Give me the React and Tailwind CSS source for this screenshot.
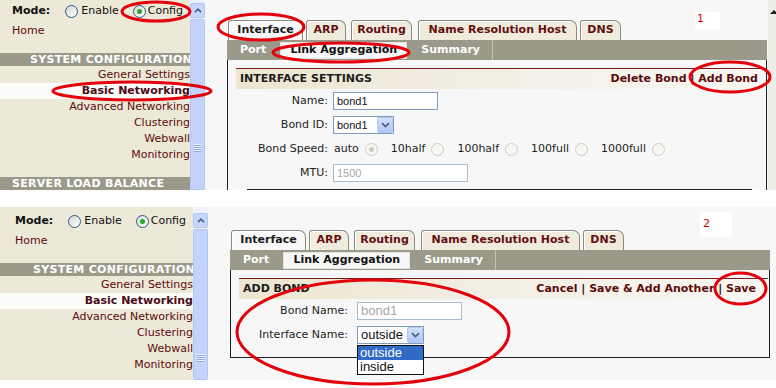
import React from 'react';

const MENU = ['General Settings', 'Basic Networking', 'Advanced Networking', 'Clustering', 'Webwall', 'Monitoring'];

const TABS = [
  { label: 'Interface', w: 'w-[75px]', ml: 'ml-0', active: true },
  { label: 'ARP', w: 'w-[40px]', ml: 'ml-[3px]' },
  { label: 'Routing', w: 'w-[61px]', ml: 'ml-[5px]' },
  { label: 'Name Resolution Host', w: 'w-[159px]', ml: 'ml-[6px]' },
  { label: 'DNS', w: 'w-[41px]', ml: 'ml-[3px]' },
];

function Radio({ checked, disabled }) {
  const ring = disabled
    ? 'border-[#cfcdc2] bg-[#f7f7f4]'
    : 'border-[#2a5a8a] bg-gradient-to-br from-[#d8d8d0] to-white';
  return (
    <span className={`inline-flex shrink-0 items-center justify-center w-[13px] h-[13px] rounded-full border ${ring}`}>
      {checked && <span className={`w-[5px] h-[5px] rounded-full ${disabled ? 'bg-[#cbc9be]' : 'bg-[#2aa52a]'}`} />}
    </span>
  );
}

function Sidebar({ server }) {
  return (
    <div className="w-[193px] shrink-0 h-full bg-[#ece9d8] overflow-hidden">
      <div className="flex items-center h-[16px] mt-[6px] pl-[15px] text-[#111]">
        <span className="font-bold">Mode:</span>
        <span className="ml-[15px] flex"><Radio /></span>
        <span className="ml-[3px]">Enable</span>
        <span className="ml-[14px] flex"><Radio checked /></span>
        <span className="ml-[2px]">Config</span>
      </div>
      <div className="h-[16px] leading-[16px] mt-[4px] pl-[15px] text-[#5c0b0b]">Home</div>
      <div className="h-[13px] leading-[13px] mt-[14px] bg-[#9b9a8a] text-white font-bold pl-[33px] whitespace-nowrap tracking-[0.3px]">
        SYSTEM CONFIGURATION
      </div>
      <div className="mt-[1px]">
        {MENU.map(item => (
          <div
            key={item}
            className={`h-[16px] leading-[16px] text-right whitespace-nowrap ${item === 'Basic Networking' ? 'bg-[#fbfbf9] font-bold text-[#4a0c16]' : 'text-[#5c0b0b]'}`}
          >
            {item}
          </div>
        ))}
      </div>
      {server && (
        <div className="h-[13px] leading-[13px] mt-[14px] bg-[#9b9a8a] text-white font-bold pl-[15px] whitespace-nowrap tracking-[0.3px]">
          SERVER LOAD BALANCE
        </div>
      )}
    </div>
  );
}

function SideScroll() {
  return (
    <div className="w-[15px] shrink-0 h-full bg-[#eef1fb] flex flex-col pt-[6px]">
      <div className="h-[15px] rounded-[2px] border border-[#b3c6f4] bg-[#c6d6fc] flex items-center justify-center">
        <svg width="8" height="5" viewBox="0 0 8 5">
          <path d="M1 4.2 L4 1.2 L7 4.2" stroke="#4d6185" strokeWidth="1.7" fill="none" />
        </svg>
      </div>
      <div className="mt-[1px] flex-1 rounded-[2px] border border-[#b3c6f4] bg-[#c3d4fc] flex flex-col items-center pt-[124px] gap-[1px]">
        {[0, 1, 2, 3].map(i => (
          <span key={i} className="w-[7px] h-[1px] bg-[#eef3ff] shadow-[0_1px_0_#8ca8e8]" />
        ))}
      </div>
    </div>
  );
}

function RightScroll() {
  return (
    <div className="w-[15px] shrink-0 h-full bg-[#eeede6] flex flex-col pt-[12px] pl-[2px]">
      <svg width="8" height="5" viewBox="0 0 8 5">
        <path d="M0 5 L4 1 L8 5 Z" fill="#222" />
      </svg>
    </div>
  );
}

function Tabs() {
  return (
    <div className="flex h-[20px] ml-[23px]">
      {TABS.map(t => (
        <div
          key={t.label}
          className={`${t.w} ${t.ml} h-[20px] flex items-center justify-center font-bold border border-b-0 border-[#8c8a7c] rounded-tl-[3px] rounded-tr-[7px] shadow-[inset_1px_1px_0_#fff] whitespace-nowrap ${t.active ? 'bg-[#f8f8f8] text-[#1a1a1a]' : 'bg-[#efebdd] text-[#641010]'}`}
        >
          {t.label}
        </div>
      ))}
    </div>
  );
}

function Subtabs() {
  return (
    <div className="-mx-px h-[20px] bg-[#9b9a8a] flex items-center font-bold text-white">
      <span className="ml-[13px]">Port</span>
      <span className="ml-[14px] w-[127px] h-[17px] flex items-center justify-center bg-[#f7f7f7] border border-[#e4e4e0] text-[#111]">
        Link Aggregation
      </span>
      <span className="ml-[14px]">Summary</span>
      <span className="ml-[12px] w-px h-[20px] bg-[#c4c3b6]" />
    </div>
  );
}

function Header({ title, links, pr }) {
  return (
    <div className={`h-[21px] border-t border-[#7a1d1d] bg-gradient-to-r from-[#ece5d0] via-[#f3efe5] to-[#f8f7f3] flex items-center justify-between pl-[4px] ${pr} font-bold`}>
      <span className="text-[#1c1c1c]">{title}</span>
      <span className="text-[#5c0b0b] whitespace-nowrap">
        {links.map((l, i) => (
          <span key={l}>
            {i > 0 && <span className="text-[#3a0808]"> | </span>}
            {l}
          </span>
        ))}
      </span>
    </div>
  );
}

function Row({ label, lw, gap, children }) {
  return (
    <div className="h-[24px] flex items-center">
      <span className={`${lw} text-right shrink-0 whitespace-nowrap`}>{label}</span>
      <div className={`${gap} flex items-center`}>{children}</div>
    </div>
  );
}

function TextBox({ value, w, disabled, text }) {
  return (
    <div className={`${w} h-[18px] border bg-white flex items-center pl-[3px] font-['Liberation_Sans',Arial,sans-serif] ${text} ${disabled ? 'border-[#a9bccf] text-[#a8a8a8]' : 'border-[#7f9db9] text-[#111]'}`}>
      {value}
    </div>
  );
}

function Select({ value, w, text, children }) {
  return (
    <div className={`relative ${w} h-[18px] border border-[#7f9db9] bg-white flex items-center font-['Liberation_Sans',Arial,sans-serif] ${text} text-[#111]`}>
      <span className="pl-[3px] flex-1">{value}</span>
      <span className="w-[16px] h-[16px] rounded-[2px] border border-[#b5c8f4] bg-gradient-to-b from-[#d2dffd] to-[#b3c8f6] flex items-center justify-center">
        <svg width="9" height="6" viewBox="0 0 9 6">
          <path d="M1 1.2 L4.5 4.6 L8 1.2" stroke="#4d6185" strokeWidth="1.8" fill="none" />
        </svg>
      </span>
      {children}
    </div>
  );
}

function SpeedOption({ label, checked }) {
  return (
    <span className="flex items-center mr-[13px]">
      <span>{label}</span>
      <span className="ml-[6px] flex"><Radio disabled checked={checked} /></span>
    </span>
  );
}

function TopForm() {
  return (
    <div>
      <Header title="INTERFACE SETTINGS" links={['Delete Bond', 'Add Bond']} pr="pr-[7px]" />
      <Row label="Name:" lw="w-[92px]" gap="ml-[5px]">
        <TextBox value="bond1" w="w-[105px]" text="text-[11px]" />
      </Row>
      <Row label="Bond ID:" lw="w-[92px]" gap="ml-[5px]">
        <Select value="bond1" w="w-[61px]" text="text-[11px]" />
      </Row>
      <Row label="Bond Speed:" lw="w-[92px]" gap="ml-[6px]">
        <SpeedOption label="auto" checked />
        <SpeedOption label="10half" />
        <SpeedOption label="100half" />
        <SpeedOption label="100full" />
        <SpeedOption label="1000full" />
      </Row>
      <Row label="MTU:" lw="w-[92px]" gap="ml-[5px]">
        <TextBox value="1500" w="w-[135px]" disabled text="text-[11px]" />
      </Row>
      <div className="mt-[4px] ml-[11px] w-[505px] h-px bg-[#222]" />
    </div>
  );
}

function BottomForm() {
  return (
    <div>
      <Header title="ADD BOND" links={['Cancel', 'Save & Add Another', 'Save']} pr="pr-[12px]" />
      <Row label="Bond Name:" lw="w-[109px]" gap="ml-[9px]">
        <TextBox value="bond1" w="w-[105px]" disabled text="text-[13px]" />
      </Row>
      <Row label="Interface Name:" lw="w-[109px]" gap="ml-[9px]">
        <Select value="outside" w="w-[67px]" text="text-[13px]">
          <div className="absolute left-[-1px] top-[18px] w-[67px] border border-[#111] bg-white leading-[14px]">
            <div className="h-[14px] pl-[2px] bg-[#316ac5] text-white">outside</div>
            <div className="h-[14px] pl-[2px] text-[#111]">inside</div>
          </div>
        </Select>
      </Row>
    </div>
  );
}

function Panel({ top }) {
  return (
    <div className="relative flex h-full">
      <Sidebar server={top} />
      <SideScroll />
      <div className={`${top ? 'w-[563px]' : 'w-[568px]'} shrink-0 h-full bg-[#f7f7f7] pt-[23px]`}>
        <Tabs />
        <div className={`ml-[22px] w-[540px] ${top ? 'h-[200px]' : 'h-[108px]'} border-x border-b border-[#222]`}>
          <Subtabs />
          <div className="ml-[8px] mr-px mt-[8px]">
            {top ? <TopForm /> : <BottomForm />}
          </div>
        </div>
      </div>
      {top && <RightScroll />}
      {top ? (
        <div className="absolute left-[698px] top-[15px] w-[25px] h-[18px] bg-white text-[#d40000] pl-[2px] leading-[14px]">1</div>
      ) : (
        <div className="absolute left-[700px] top-[5px] w-[32px] h-[25px] bg-white text-[#d40000] pl-[3px] pt-[6px] leading-[11px]">2</div>
      )}
    </div>
  );
}

function Marks() {
  const rings = [
    [156, 11.5, 34, 9.5],
    [132, 91, 79, 9],
    [261, 27, 43, 13],
    [341, 52.5, 68, 9.5],
    [730, 77, 40, 15],
    [373, 332, 136, 52],
    [740.5, 288.5, 25.5, 15.5],
  ];
  return (
    <svg className="absolute inset-0 pointer-events-none" width="776" height="388" viewBox="0 0 776 388">
      {rings.map(([cx, cy, rx, ry], i) => (
        <ellipse key={i} cx={cx} cy={cy} rx={rx} ry={ry} fill="none" stroke="#e3000c" strokeWidth="3" />
      ))}
    </svg>
  );
}

export default function App() {
  return (
    <div className="relative w-[776px] h-[388px] bg-white overflow-hidden font-['DejaVu_Sans',Verdana,sans-serif] text-[11px] text-[#222]">
      <div className="h-[190px] overflow-hidden">
        <div className="-mt-[3px] -ml-[3px] w-[786px] h-[193px]">
          <Panel top />
        </div>
      </div>
      <div className="mt-[17px] h-[173px] overflow-hidden">
        <Panel />
      </div>
      <Marks />
    </div>
  );
}
